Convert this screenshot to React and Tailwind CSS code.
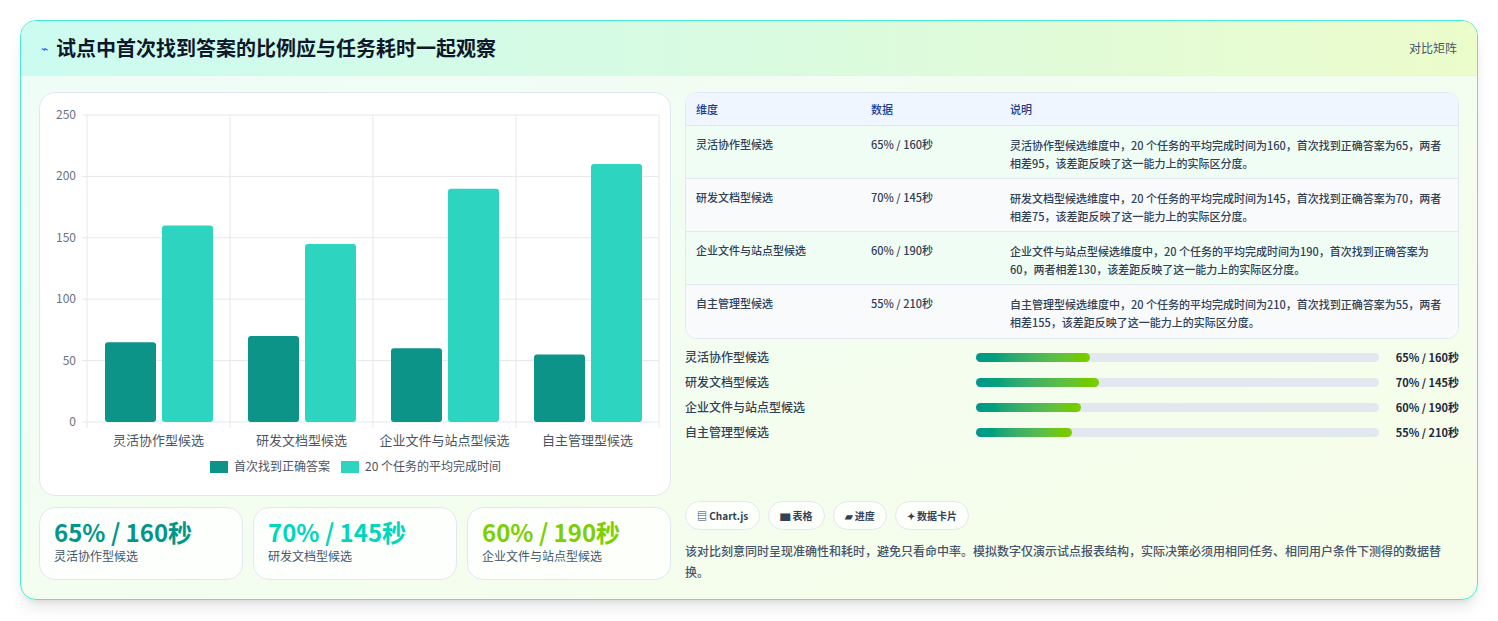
import React from "react";

const rows = [
  { name: "灵活协作型候选", a: 65, t: 160, d: "灵活协作型候选维度中，20 个任务的平均完成时间为160，首次找到正确答案为65，两者相差95，该差距反映了这一能力上的实际区分度。" },
  { name: "研发文档型候选", a: 70, t: 145, d: "研发文档型候选维度中，20 个任务的平均完成时间为145，首次找到正确答案为70，两者相差75，该差距反映了这一能力上的实际区分度。" },
  { name: "企业文件与站点型候选", a: 60, t: 190, d: "企业文件与站点型候选维度中，20 个任务的平均完成时间为190，首次找到正确答案为60，两者相差130，该差距反映了这一能力上的实际区分度。" },
  { name: "自主管理型候选", a: 55, t: 210, d: "自主管理型候选维度中，20 个任务的平均完成时间为210，首次找到正确答案为55，两者相差155，该差距反映了这一能力上的实际区分度。" },
];

const font = { fontFamily: '"Noto Sans CJK SC", "Noto Sans", sans-serif' };

function Chart() {
  // card-local coordinates: plot x 47..619, y 22..329
  const y0 = 329, k = 307 / 250, x0 = 47, cw = 143;
  return (
    <svg width="631" height="403" className="block">
      {[0, 50, 100, 150, 200, 250].map((v) => (
        <g key={v}>
          <line x1={x0 - 5} x2="619" y1={y0 - v * k} y2={y0 - v * k} stroke="#e5e7eb" />
          <text x="36" y={y0 - v * k + 4} textAnchor="end" fontSize="12" fill="#6b7280">{v}</text>
        </g>
      ))}
      {[0, 1, 2, 3, 4].map((i) => (
        <line key={i} x1={x0 + i * cw} x2={x0 + i * cw} y1="22" y2={y0 + 6} stroke="#e5e7eb" />
      ))}
      {rows.map((r, i) => {
        const bx = x0 + i * cw + 18;
        return (
          <g key={i}>
            <rect x={bx} y={y0 - r.a * k} width="51" height={r.a * k} rx="3" fill="#0d9488" />
            <rect x={bx + 57} y={y0 - r.t * k} width="51" height={r.t * k} rx="3" fill="#2dd4bf" />
            <text x={x0 + i * cw + cw / 2} y="352" textAnchor="middle" fontSize="13" fill="#4b5563">{r.name}</text>
          </g>
        );
      })}
      <rect x="170" y="368" width="18" height="12" fill="#0d9488" />
      <text x="194" y="378" fontSize="12" fill="#4b5563">首次找到正确答案</text>
      <rect x="301" y="368" width="18" height="12" fill="#2dd4bf" />
      <text x="325" y="378" fontSize="12" fill="#4b5563">20 个任务的平均完成时间</text>
    </svg>
  );
}

export default function App() {
  return (
    <div className="w-[1498px] h-[621px] bg-white p-5" style={font}>
      <div className="rounded-2xl border border-teal-300 shadow-lg overflow-hidden bg-gradient-to-br from-[#effdf8] to-[#f7fde8] h-[580px]">
        <div className="h-[55px] flex items-center justify-between px-5 bg-gradient-to-r from-[#ccfbf1] via-[#d9fbe1] to-[#ecfccb] border-b border-teal-100">
          <div className="flex items-center gap-2">
            <span className="text-blue-600 text-xs">⌁</span>
            <span className="text-[20px] font-bold text-slate-900">试点中首次找到答案的比例应与任务耗时一起观察</span>
          </div>
          <span className="text-xs text-slate-600">对比矩阵</span>
        </div>
        <div className="flex gap-[14px] px-[18px] pt-[16px]">
          <div className="w-[632px] flex flex-col gap-[11px]">
            <div className="bg-white rounded-2xl border border-slate-200 h-[404px]">
              <Chart />
            </div>
            <div className="flex gap-[10px]">
              {[["65% / 160秒", "text-teal-600", 0], ["70% / 145秒", "text-teal-400", 1], ["60% / 190秒", "text-lime-500", 2]].map(([v, c, i]) => (
                <div key={i} className="w-[204px] h-[73px] rounded-2xl border border-slate-200 bg-white/80 px-[14px] pt-[8px]">
                  <div className={`text-[24px] font-bold leading-8 ${c}`}>{v}</div>
                  <div className="text-xs text-slate-600">{rows[i].name}</div>
                </div>
              ))}
            </div>
          </div>
          <div className="flex-1 flex flex-col">
            <div className="rounded-xl border border-slate-200 overflow-hidden bg-white text-[11px] font-medium text-slate-700">
              <div className="flex h-[33px] items-center bg-[#eff6ff] text-blue-900 border-b border-slate-200">
                <div className="w-[185px] pl-[10px]">维度</div>
                <div className="w-[139px]">数据</div>
                <div className="flex-1">说明</div>
              </div>
              {rows.map((r, i) => (
                <div key={i} className={`flex items-start h-[53px] pt-[10px] ${i % 2 ? "bg-slate-50" : "bg-[#f0fdf4]"} ${i < 3 ? "border-b border-slate-200" : ""}`}>
                  <div className="w-[185px] pl-[10px]">{r.name}</div>
                  <div className="w-[139px]">{r.a}% / {r.t}秒</div>
                  <div className="flex-1 pr-[16px] leading-[18px]">{r.d}</div>
                </div>
              ))}
            </div>
            <div className="flex flex-col gap-[7px] mt-[9px] text-xs font-medium text-slate-700">
              {rows.map((r, i) => (
                <div key={i} className="flex items-center h-[18px]">
                  <div className="w-[291px]">{r.name}</div>
                  <div className="w-[403px] h-[9px] rounded-full bg-slate-200">
                    <div className="h-full rounded-full bg-gradient-to-r from-teal-600 to-lime-500" style={{ width: `${(r.a / 230) * 100}%` }} />
                  </div>
                  <div className="flex-1 text-right text-[11px] font-bold text-slate-800">{r.a}% / {r.t}秒</div>
                </div>
              ))}
            </div>
            <div className="flex gap-[8px] mt-[60px] text-[10px] font-semibold text-slate-700">
              {["▤ Chart.js", "▆ 表格", "▰ 进度", "✦ 数据卡片"].map((t) => (
                <span key={t} className="h-[29px] px-[11px] flex items-center rounded-full border border-slate-200 bg-white/80">{t}</span>
              ))}
            </div>
            <p className="mt-[10px] pr-[4px] text-xs leading-[21px] text-slate-600 font-medium">该对比刻意同时呈现准确性和耗时，避免只看命中率。模拟数字仅演示试点报表结构，实际决策必须用相同任务、相同用户条件下测得的数据替换。</p>
          </div>
        </div>
      </div>
    </div>
  );
}
